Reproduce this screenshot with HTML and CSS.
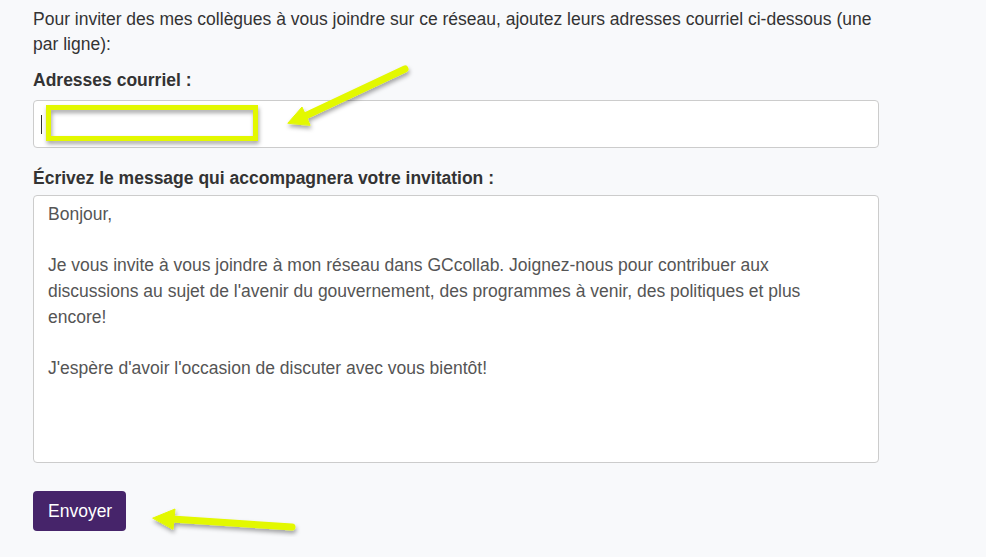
FILE: index.html
```html
<!DOCTYPE html>
<html lang="fr">
<head>
<meta charset="utf-8">
<link rel="stylesheet" href="styles.css">
</head>
<body>
<main class="page">
  <p class="intro">Pour inviter des mes collègues à vous joindre sur ce réseau, ajoutez leurs adresses courriel ci-dessous (une par ligne):</p>
  <label class="field-label" for="emails">Adresses courriel :</label>
  <div class="input-box" id="emails"><span class="caret"></span></div>
  <label class="field-label second" for="msg">Écrivez le message qui accompagnera votre invitation :</label>
  <div class="textarea-box" id="msg">
    <p>Bonjour,</p>
    <p>Je vous invite à vous joindre à mon réseau dans GCcollab. Joignez-nous pour contribuer aux discussions au sujet de l'avenir du gouvernement, des programmes à venir, des politiques et plus encore!</p>
    <p>J'espère d'avoir l'occasion de discuter avec vous bientôt!</p>
  </div>
  <button class="send">Envoyer</button>
</main>
<svg class="annot" width="986" height="557" viewBox="0 0 986 557">
  <defs>
    <filter id="sh" x="-20%" y="-20%" width="140%" height="160%">
      <feDropShadow dx="1" dy="3" stdDeviation="2" flood-color="#000" flood-opacity="0.35"/>
    </filter>
  </defs>
  <g filter="url(#sh)" fill="none" stroke="#e3f800">
    <rect x="48.5" y="107.5" width="207" height="31" stroke-width="5"/>
  </g>
  <g filter="url(#sh)" fill="#e3f800" stroke="#e3f800" stroke-linecap="round" stroke-linejoin="round">
    <line x1="405" y1="69" x2="303" y2="117" stroke-width="7"/>
    <polygon points="288,123 302,107 310,125" stroke-width="1"/>
  </g>
  <g filter="url(#sh)" fill="#e3f800" stroke="#e3f800" stroke-linecap="round" stroke-linejoin="round">
    <line x1="292" y1="527" x2="172" y2="519" stroke-width="7"/>
    <polygon points="153,518 175,509 173,529" stroke-width="1"/>
  </g>
</svg>
</body>
</html>
```

FILE: styles.css
```css
html, body {
  margin: 0;
  padding: 0;
  background: #f8f9fb;
}
body {
  font-family: "Liberation Sans", Arial, sans-serif;
  font-size: 17.5px;
  line-height: 25px;
  color: #333;
  position: relative;
  width: 986px;
  height: 557px;
  overflow: hidden;
}
.page {
  padding: 7px 0 0 33px;
  width: 846px;
  display: flex;
  flex-direction: column;
  align-items: flex-start;
}
.intro {
  margin: 0;
}
.field-label {
  font-weight: bold;
  margin-top: 11px;
  margin-bottom: 7px;
}
.field-label.second {
  margin-top: 18px;
  margin-bottom: 4px;
}
.input-box {
  box-sizing: border-box;
  width: 846px;
  height: 48px;
  background: #fff;
  border: 1px solid #ccc;
  border-radius: 4px;
  padding: 12px 7px;
  display: flex;
  align-items: center;
}
.caret {
  display: block;
  width: 1px;
  height: 19px;
  background: #333;
}
.textarea-box {
  box-sizing: border-box;
  width: 846px;
  height: 268px;
  background: #fff;
  border: 1px solid #ccc;
  border-radius: 4px;
  padding: 6px 32px 6px 14px;
  color: #555;
  line-height: 25.67px;
}
.textarea-box p {
  margin: 0 0 25.67px 0;
}
.send {
  margin-top: 28px;
  background: #46246a;
  color: #fff;
  border: none;
  border-radius: 4px;
  font-family: "Liberation Sans", Arial, sans-serif;
  font-size: 17.5px;
  line-height: 20px;
  padding: 10px 15px;
  width: 93px;
  height: 40px;
  cursor: pointer;
}
.annot {
  position: absolute;
  left: 0;
  top: 0;
  pointer-events: none;
}
```
